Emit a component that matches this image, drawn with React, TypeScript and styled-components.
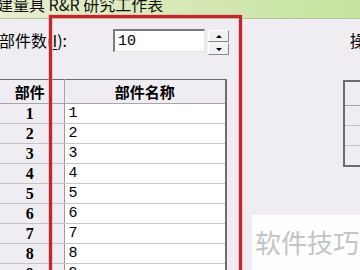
import styled, { createGlobalStyle } from 'styled-components';

const GlobalStyle = createGlobalStyle`
  html, body {
    margin: 0;
    padding: 0;
    overflow: hidden;
    background: #efedf1;
  }
`;

const FONT = `"Noto Sans CJK SC", "Liberation Sans", sans-serif`;
const DIGITS = `"Liberation Mono", "Noto Sans CJK SC", monospace`;

const partCount = 10;
const rows = Array.from({ length: partCount }, (_, i) => i + 1);
const sideRows = [1, 2, 3];

const App = () => {
  return (
    <>
      <GlobalStyle />
      <Window>
        <TitleBar>
          <TitleText>建量具 R&amp;R 研究工作表</TitleText>
        </TitleBar>

        <Toolbar>
          <FieldLabel>
            部件数(<u>I</u>):
          </FieldLabel>
          <NumberBox>10</NumberBox>
          <Spinner>
            <SpinButton>
              <Arrow $up />
            </SpinButton>
            <SpinButton>
              <Arrow />
            </SpinButton>
          </Spinner>
          <SideLabel>操作员数(O):</SideLabel>
        </Toolbar>

        <Tables>
          <Sheet>
            <colgroup>
              <col style={{ width: 68 }} />
              <col />
            </colgroup>
            <thead>
              <tr>
                <HeadCell>部件</HeadCell>
                <HeadCell>部件名称</HeadCell>
              </tr>
            </thead>
            <tbody>
              {rows.map(n => (
                <tr key={n}>
                  <RowHead>{n}</RowHead>
                  <NameCell>{n}</NameCell>
                </tr>
              ))}
            </tbody>
          </Sheet>

          <SideSheet>
            <thead>
              <tr>
                <HeadCell />
              </tr>
            </thead>
            <tbody>
              {sideRows.map(n => (
                <tr key={n}>
                  <RowHead />
                </tr>
              ))}
            </tbody>
          </SideSheet>
        </Tables>

        <RedFrame />
        <Watermark>软件技巧</Watermark>
      </Window>
    </>
  );
};

const Window = styled.div`
  position: relative;
  width: 360px;
  height: 270px;
  overflow: hidden;
  background: #efedf1;
  font-family: ${FONT};
  color: #000;
`;

const TitleBar = styled.div`
  height: 18px;
  display: flex;
  align-items: flex-start;
  overflow: hidden;
  background: linear-gradient(90deg, #e8edcf 0%, #d8e9b8 45%, #c5e49e 100%);
  border-bottom: 1px solid #b4c49a;
`;

const TitleText = styled.span`
  margin: -6px 0 0 -3px;
  font-size: 16px;
  line-height: 20px;
  white-space: nowrap;
  color: #111;
`;

const Toolbar = styled.div`
  display: flex;
  align-items: flex-start;
  height: 26px;
  margin-top: 10px;

  & > * {
    flex: none;
  }
`;

const FieldLabel = styled.div`
  width: 114px;
  margin-left: -1px;
  font-size: 16px;
  line-height: 23px;
  white-space: nowrap;

  u {
    text-underline-offset: 2px;
  }
`;

const NumberBox = styled.div`
  box-sizing: border-box;
  width: 92px;
  height: 23px;
  padding: 1px 0 0 3px;
  background: #fff;
  border-top: 2px solid #7c7c7c;
  border-left: 2px solid #7c7c7c;
  border-right: 1px solid #e4e4e4;
  border-bottom: 1px solid #e4e4e4;
  font-family: ${DIGITS};
  font-size: 15px;
  line-height: 19px;
`;

const Spinner = styled.div`
  display: flex;
  flex-direction: column;
  gap: 1px;
  margin: 1px 0 0 3px;
`;

const SpinButton = styled.div`
  box-sizing: border-box;
  width: 21px;
  height: 12px;
  display: flex;
  align-items: center;
  justify-content: center;
  background: #f2f1f3;
  border-top: 1px solid #fff;
  border-left: 1px solid #fff;
  border-right: 1px solid #8a8a8a;
  border-bottom: 1px solid #8a8a8a;
`;

const Arrow = styled.span<{ $up?: boolean }>`
  width: 0;
  height: 0;
  border-left: 3px solid transparent;
  border-right: 3px solid transparent;
  ${p =>
    p.$up ? 'border-bottom: 3px solid #000;' : 'border-top: 3px solid #000;'}
`;

const SideLabel = styled.div`
  margin-left: 121px;
  font-size: 16px;
  line-height: 23px;
  white-space: nowrap;
`;

const Tables = styled.div`
  display: flex;
  align-items: flex-start;
  margin-top: 24px;

  & > * {
    flex: none;
  }
`;

const Sheet = styled.table`
  width: 231px;
  margin-left: -4px;
  border-collapse: collapse;
  table-layout: fixed;
  border-top: 1px solid #6c6c6c;
  border-right: 2px solid #6c6c6c;
`;

const SideSheet = styled.table`
  width: 40px;
  margin: 1px 0 0 116px;
  border-collapse: collapse;
  table-layout: fixed;
  border: 2px solid #6c6c6c;
`;

const HeadCell = styled.th`
  height: 23px;
  padding: 0;
  background: #efedf1;
  border-bottom: 1px solid #a6a6a6;
  border-right: 1px solid #a6a6a6;
  font-size: 15px;
  font-weight: 700;
  text-align: center;
`;

const RowHead = styled.th`
  height: 19px;
  padding: 0;
  background: #efedf1;
  border-bottom: 1px solid #c4c4c4;
  border-right: 1px solid #9a9a9a;
  font-family: "Liberation Serif", serif;
  font-size: 16px;
  font-weight: 700;
  text-align: center;
  line-height: 19px;
`;

const NameCell = styled.td`
  height: 19px;
  padding: 0 0 0 4px;
  background: #fff;
  border-bottom: 1px solid #c8c8c8;
  font-family: ${DIGITS};
  font-size: 15px;
  line-height: 19px;
`;

const RedFrame = styled.div`
  position: absolute;
  left: 49px;
  top: 15px;
  width: 193px;
  height: 300px;
  box-sizing: border-box;
  border: 3px solid #c1272d;
  box-shadow: 0 0 0 1px rgba(235, 150, 150, 0.45),
    inset 0 0 0 1px rgba(235, 150, 150, 0.45);
  pointer-events: none;
`;

const Watermark = styled.div`
  position: absolute;
  left: 252px;
  top: 215px;
  width: 108px;
  height: 55px;
  box-sizing: border-box;
  padding: 12px 0 0 3px;
  background: rgba(255, 255, 255, 0.92);
  color: #c4c4c4;
  font-size: 26px;
  line-height: 30px;
  white-space: nowrap;
`;

export default App;
